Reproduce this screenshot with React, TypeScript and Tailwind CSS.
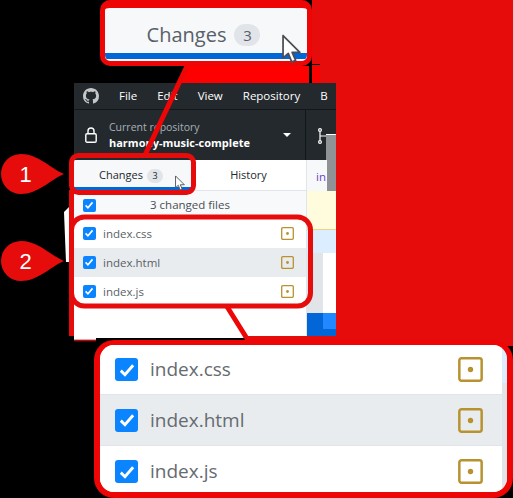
const GITHUB_MARK =
  "M8 0c4.42 0 8 3.58 8 8a8.013 8.013 0 0 1-5.45 7.59c-.4.08-.55-.17-.55-.38 0-.27.01-1.13.01-2.2 0-.75-.25-1.23-.54-1.48 1.78-.2 3.65-.88 3.65-3.95 0-.88-.31-1.59-.82-2.15.08-.2.36-1.02-.08-2.12 0 0-.67-.22-2.2.82-.64-.18-1.32-.27-2-.27-.68 0-1.36.09-2 .27-1.53-1.03-2.2-.82-2.2-.82-.44 1.1-.16 1.92-.08 2.12-.51.56-.82 1.28-.82 2.15 0 3.06 1.86 3.75 3.64 3.95-.23.2-.44.55-.51 1.07-.46.21-1.61.55-2.33-.66-.15-.24-.6-.83-1.23-.82-.67.01-.27.38.01.53.34.19.73.9.82 1.13.16.45.68 1.31 2.69.94 0 .67.01 1.3.01 1.49 0 .21-.15.45-.55.38A7.995 7.995 0 0 1 0 8c0-4.42 3.58-8 8-8Z";

const files = ["index.css", "index.html", "index.js"];

function Check({ className }: { className: string }) {
  return (
    <span className={`flex shrink-0 items-center justify-center bg-[#0a84ff] ${className}`}>
      <svg viewBox="0 0 16 16" className="h-[78%] w-[78%]" fill="none">
        <path d="M2.5 8.6 6.2 12.2 13.5 3.8" stroke="#fff" strokeWidth="2.6" />
      </svg>
    </span>
  );
}

function ModifiedIcon({ className }: { className: string }) {
  return (
    <svg viewBox="0 0 14 14" className={`shrink-0 ${className}`} fill="none">
      <rect x="0.75" y="0.75" width="12.5" height="12.5" rx="1.2" stroke="#b8922e" strokeWidth="1.4" />
      <circle cx="7" cy="7" r="1.5" fill="#b8922e" />
    </svg>
  );
}

function Cursor({ className }: { className: string }) {
  return (
    <svg viewBox="0 0 12 17" className={className}>
      <path
        d="M0.6 0.8V13.6L3.6 11 5.6 16 7.8 15 5.8 10.4H10.2Z"
        fill="#fff"
        stroke="#4b4f55"
        strokeWidth="1"
        strokeLinejoin="round"
      />
    </svg>
  );
}

function Bubble({ label, className }: { label: string; className: string }) {
  return (
    <div className={`absolute h-10 w-16 ${className}`}>
      <svg viewBox="0 0 64 40" className="absolute inset-0 h-full w-full">
        <path d="M64 20C50 14 38 0 21 0A20 20 0 0 0 21 40C38 40 50 26 64 20Z" fill="#e60c0c" />
      </svg>
      <span className="absolute left-0 top-0 flex h-10 w-[51px] items-center justify-center text-[22px] text-white">
        {label}
      </span>
    </div>
  );
}

function Sidebar() {
  return (
    <div className="flex w-[232px] flex-col bg-white">
      <div className="flex h-[31px] border-b border-[#e1e4e8]">
        <div className="flex w-[117px] items-center justify-center gap-1 border-b-[3px] border-[#0366d6] bg-[#f6f8fa] pr-[3px] pt-1 text-[11px] text-[#24292e]">
          Changes
          <span className="flex h-3.5 w-4 items-center justify-center rounded-full bg-[#e1e4e8] text-[9px]">3</span>
        </div>
        <div className="flex flex-1 items-center justify-center pt-px text-[11px] text-[#24292e]">History</div>
      </div>
      <div className="flex h-7 items-center bg-[#f8f9fa] pl-[9px] pr-[22px] text-[11.5px] text-[#4a4f55]">
        <Check className="h-[13px] w-[13px] rounded-[2px]" />
        <span className="flex-1 text-center">3 changed files</span>
      </div>
      {files.map((name, i) => (
        <div
          key={name}
          className={`flex h-[29px] items-center pl-[9px] pr-[12px] text-[11.5px] text-[#5a5f66] ${
            i === 1 ? "bg-[#e9ecef]" : "bg-white"
          }`}
        >
          <Check className="h-[13px] w-[13px] rounded-[2px]" />
          <span className="ml-[7px] flex-1">{name}</span>
          <ModifiedIcon className="h-[13px] w-[13px]" />
        </div>
      ))}
    </div>
  );
}

function DiffPane() {
  return (
    <div className="flex flex-1 flex-col">
      <div className="flex h-[31px]">
        <div className="flex w-5 items-center overflow-hidden whitespace-nowrap bg-[#f6f8fa] pl-[9px] pt-[3px] text-[11.5px] text-[#6f42c1]">
          in
        </div>
        <div className="flex-1 bg-[#8f9396]" />
      </div>
      <div className="h-[39px] border-b border-[#e8d48a] bg-[#fffbdd]" />
      <div className="h-[23px] bg-[#dbedff]" />
      <div className="flex h-[60px]">
        <div className="w-4 bg-[#e1e4e8]" />
        <div className="flex-1 bg-white" />
      </div>
      <div className="flex flex-1 bg-[#0366d6]">
        <div className="w-4" />
        <div className="h-4 flex-1 bg-[#2188ff]" />
      </div>
    </div>
  );
}

function AppWindow() {
  return (
    <div className="absolute left-[74px] top-[83px] flex h-[255px] w-[262px] flex-col bg-[#24292e] font-['Open_Sans',sans-serif]">
      <div className="flex h-[27px] items-center border-b border-[#14171a] text-[11.5px] text-white">
        <svg viewBox="0 0 16 16" className="ml-[9px] h-4 w-4" fill="#c4c6c8">
          <path d={GITHUB_MARK} />
        </svg>
        <span className="ml-5">File</span>
        <span className="ml-5">Edit</span>
        <span className="ml-5">View</span>
        <span className="ml-5">Repository</span>
        <span className="ml-5">B</span>
      </div>
      <div className="flex h-[50px]">
        <div className="flex w-[232px] items-center border-r border-[#14171a]">
          <svg viewBox="0 0 12 16" className="ml-[11px] h-4 w-3" fill="none" stroke="#fff" strokeWidth="1.4">
            <rect x="0.8" y="6.7" width="10.4" height="8.5" rx="1.2" />
            <path d="M3 6.7V4a3 3 0 0 1 6 0v2.7" />
          </svg>
          <div className="ml-3 flex-1 leading-4">
            <div className="text-[10.5px] text-[#a8b0b8]">Current repository</div>
            <div className="text-[11px] font-bold text-white">harmony-music-complete</div>
          </div>
          <span className="mr-3.5 h-0 w-0 border-x-4 border-t-[4px] border-x-transparent border-t-white" />
        </div>
        <svg viewBox="0 0 8 16" className="ml-3 mt-[18px] h-4 w-2" fill="none" stroke="#fff" strokeWidth="1.2">
          <circle cx="2" cy="2" r="1.4" />
          <circle cx="2" cy="14" r="1.4" />
          <path d="M2 3.4V12.6M2 8H8" />
        </svg>
        <div className="mt-6 flex-1 border-t border-white bg-[#8f9396]" />
      </div>
      <div className="flex flex-1">
        <Sidebar />
        <div className="w-px bg-[#e1e4e8]" />
        <DiffPane />
      </div>
    </div>
  );
}

function ChangesZoom() {
  return (
    <div className="absolute left-[100px] top-0 h-[66px] w-[212px] rounded-[10px] border-x-[5px] border-b-[5px] border-t-[8px] border-[#ee0505] bg-[#f6f8fa] font-['Open_Sans',sans-serif]">
      <div className="overflow-hidden rounded-md pb-0.5">
        <div className="flex h-[51px] items-start justify-center gap-2 border-b-[6px] border-[#0366d6] pr-[5px] pt-[9px] text-[20px] leading-[36px] text-[#586069]">
          Changes
          <span className="mt-[7px] flex h-[22px] w-[26px] items-center justify-center rounded-full bg-[#e1e4e8] text-[15px] leading-none">
            3
          </span>
        </div>
      </div>
      <Cursor className="absolute left-[177px] top-[26px] h-[30px] w-[21px]" />
    </div>
  );
}

function FilesZoom() {
  return (
    <div className="absolute left-[94px] top-[340px] h-[158px] w-[419px] rounded-[20px] border-x-[6px] border-b-[6px] border-t-[5px] border-[#ee0505] bg-white font-['Open_Sans',sans-serif]">
      <div className="flex h-full overflow-hidden rounded-[14px]">
        <div className="flex-1">
          {files.map((name, i) => (
            <div
              key={name}
              className={`flex items-center border-[#e1e4e8] pl-[15px] pr-[19px] text-[19px] text-[#666b70] ${
                i === 0 ? "h-[49px] bg-white" : i === 1 ? "h-[52px] border-y bg-[#e9ecef]" : "h-[51px] bg-white"
              }`}
            >
              <Check className="h-[23px] w-[23px] rounded-[3px]" />
              <span className="ml-3 flex-1">{name}</span>
              <ModifiedIcon className="h-[25px] w-[25px]" />
            </div>
          ))}
        </div>
        <div className="flex w-[5px] flex-col">
          <div className="h-[38px] bg-[#dbedff]" />
          <div className="flex-1 bg-[#e1e4e8]" />
        </div>
      </div>
    </div>
  );
}

export default function App() {
  return (
    <div className="relative h-[498px] w-[513px] overflow-hidden bg-black">
      {/* red backing behind the window and the zoomed callouts */}
      <svg viewBox="0 0 513 498" className="absolute inset-0 h-full w-full">
        <path d="M312 0H513V346H336V83H312Z" fill="#e60c0c" />
        <path d="M64 212 74 202V262H66Z" fill="#fff" />
      </svg>

      <AppWindow />

      {/* callout frames and connectors */}
      <svg viewBox="0 0 513 498" className="absolute inset-0 h-full w-full">
        <path d="M186 66H320V83H178Z" fill="#f00" />
        <path d="M188 64 145 155" stroke="#ee0505" strokeWidth="5" />
        <path d="M310.5 65V83" stroke="#000" strokeWidth="3" />
        <path d="M309 64.5H320" stroke="#000" strokeWidth="1" />
        <path d="M71.5 190V336" stroke="#e60c0c" strokeWidth="5" />
        <path d="M74 338H96V339H74Z" fill="#fff" />
        <path d="M74 339H96V340H74Z" fill="#f4a0a0" />
        <path d="M74 340H96V341H74Z" fill="#a01010" />
        <path d="M74 341H96V342H74Z" fill="#400404" />
        <path d="M226 305 246 337" stroke="#ee0505" strokeWidth="5" />
        <path d="M243 336H336V346H248Z" fill="#e60c0c" />
        <rect x="71.5" y="155.5" width="122" height="37" rx="7" fill="none" stroke="#e60c0c" strokeWidth="5" />
        <rect x="71.5" y="217" width="239" height="89" rx="13" fill="none" stroke="#e60c0c" strokeWidth="5" />
      </svg>

      <Cursor className="absolute left-[175px] top-[175px] h-[16px] w-[11px]" />
      <ChangesZoom />
      <FilesZoom />
      <Bubble label="1" className="left-0 top-[154px] font-['Liberation_Sans',sans-serif]" />
      <Bubble label="2" className="left-0 top-[241px] font-['Liberation_Sans',sans-serif]" />
    </div>
  );
}
